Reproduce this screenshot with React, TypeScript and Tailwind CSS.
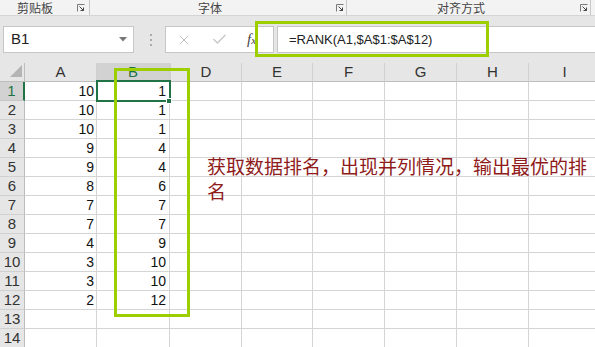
import { Check, X } from "lucide-react";

const colA = [10, 10, 10, 9, 9, 8, 7, 7, 4, 3, 3, 2];
const colB = [1, 1, 1, 4, 4, 6, 7, 7, 9, 10, 10, 12];
const headers = ["A", "B", "D", "E", "F", "G", "H", "I"];

function Launcher() {
  return (
    <svg width="8" height="8" viewBox="0 0 8 8" className="shrink-0">
      <path d="M0.5 7.5V0.5H7.5" fill="none" stroke="#7a7a7a" strokeWidth="1" />
      <path d="M2.5 2.5L6.5 6.5M3.5 6.5H6.5V3.5" fill="none" stroke="#444" strokeWidth="1" />
    </svg>
  );
}

export default function App() {
  return (
    <div className="relative h-[347px] w-[595px] overflow-hidden bg-[#e6e6e6] font-['Liberation_Sans','Noto_Sans_CJK_SC',sans-serif]">
      {/* ribbon group labels */}
      <div className="flex h-[16px] items-start border-b border-[#d5d5d5] bg-[#f3f3f3] text-[12px] leading-[15px] text-[#444] font-['Noto_Sans_CJK_SC',sans-serif]">
        <div className="flex w-[90px] items-start border-r border-[#c8c8c8] pr-[4px]">
          <span className="ml-[17px] h-[15px]">剪贴板</span>
          <span className="ml-auto mt-[4px]"><Launcher /></span>
        </div>
        <div className="flex w-[257px] items-start border-r border-[#c8c8c8] pr-[2px]">
          <span className="ml-[108px] h-[15px]">字体</span>
          <span className="ml-auto mt-[4px]"><Launcher /></span>
        </div>
        <div className="flex w-[244px] items-start border-r border-[#c8c8c8] pr-[2px]">
          <span className="ml-[90px] h-[15px]">对齐方式</span>
          <span className="ml-auto mt-[4px]"><Launcher /></span>
        </div>
      </div>

      {/* formula bar */}
      <div className="flex h-[47px] items-start pt-[10px]">
        <div className="ml-[3px] flex h-[27px] w-[131px] items-center border border-[#c6c6c6] bg-white pl-[7px] pr-[6px] text-[15px] text-[#222]">
          <span>B1</span>
          <svg width="8" height="5" viewBox="0 0 8 5" className="ml-auto">
            <path d="M0 0H8L4 4.5Z" fill="#777" />
          </svg>
        </div>
        <div className="ml-[15px] flex h-[27px] w-[3px] flex-col items-center justify-center gap-[3px]">
          <div className="h-[2px] w-[2px] bg-[#aaa]" />
          <div className="h-[2px] w-[2px] bg-[#aaa]" />
          <div className="h-[2px] w-[2px] bg-[#aaa]" />
        </div>
        <div className="ml-[13px] flex h-[27px] w-[109px] items-center border border-[#c6c6c6] bg-white pl-[10px]">
          <X size={16} strokeWidth={1.5} color="#c0c0c0" />
          <Check size={17} strokeWidth={2} color="#c8c8c8" className="ml-[19px]" />
          <span className="ml-[19px] font-['Liberation_Serif',serif] text-[15px] italic text-[#444]">
            f<span className="text-[11px]">x</span>
          </span>
        </div>
        <div className="ml-[3px] flex h-[27px] flex-1 items-center border border-r-0 border-[#c6c6c6] bg-white pl-[11px] text-[13px] text-[#222]">
          =RANK(A1,$A$1:$A$12)
        </div>
      </div>

      {/* sheet */}
      <div className="grid grid-cols-[25px_72px_73px_72px_71px_72px_72px_72px_72px] text-[14px] text-[#111]">
        <div className="relative h-[19px] border-b border-r border-[#bdbdbd] bg-[#e6e6e6]">
          <svg width="12" height="12" viewBox="0 0 12 12" className="absolute left-[10px] top-[2px]">
            <path d="M12 0V12H0Z" fill="#b4b4b4" />
          </svg>
        </div>
        {headers.map((h) => (
          <div
            key={h}
            className={`flex h-[19px] items-center justify-center border-b border-r border-b-[#bdbdbd] border-r-[#d0d0d0] pt-[1px] text-[15px] ${
              h === "B" ? "bg-[#d2d2d2] text-[#217346]" : "bg-[#e6e6e6] text-[#333]"
            } ${h === "D" ? "border-l border-l-[#d0d0d0]" : ""}`}
          >
            {h}
          </div>
        ))}
        {Array.from({ length: 14 }, (_, i) => (
          <RowCells key={i} row={i} />
        ))}
      </div>

      {/* selected cell B1 */}
      <div className="absolute left-[96px] top-[80px] h-[22px] w-[75px] border-2 border-[#217346]" />
      <div className="absolute left-[166px] top-[98px] h-[6px] w-[6px] border border-white bg-[#217346]" />

      {/* highlight frames */}
      <div className="absolute left-[255px] top-[21px] h-[36px] w-[234px] border-[3px] border-[#9dcf00]" />
      <div className="absolute left-[114px] top-[68px] h-[249px] w-[76px] border-[3px] border-[#9dcf00]" />

      {/* note */}
      <div className="absolute left-[207px] top-[153px] w-[392px] break-all text-[19px] leading-[25px] text-[#8f1b1b] font-['Noto_Sans_CJK_SC',sans-serif]">
        获取数据排名，出现并列情况，输出最优的排名
      </div>
    </div>
  );
}

function RowCells({ row }: { row: number }) {
  const selected = row === 0;
  const a = colA[row];
  const b = colB[row];
  return (
    <>
      <div
        className={`flex h-[19px] items-center justify-center border-b border-r text-[15px] ${
          selected
            ? "border-b-[#c6c6c6] border-r-2 border-r-[#217346] bg-[#d2d2d2] text-[#217346]"
            : "border-b-[#d0d0d0] border-r-[#bdbdbd] bg-[#e6e6e6] text-[#333]"
        }`}
      >
        {row + 1}
      </div>
      <div className="flex h-[19px] items-center justify-end border-b border-r border-[#d4d4d4] bg-white pr-[2px]">
        {a ?? ""}
      </div>
      <div className="flex h-[19px] items-center justify-end border-b border-r border-[#d4d4d4] bg-white pr-[3px]">
        {b ?? ""}
      </div>
      {Array.from({ length: 6 }, (_, j) => (
        <div key={j} className="h-[19px] border-b border-r border-[#d4d4d4] bg-white" />
      ))}
    </>
  );
}
